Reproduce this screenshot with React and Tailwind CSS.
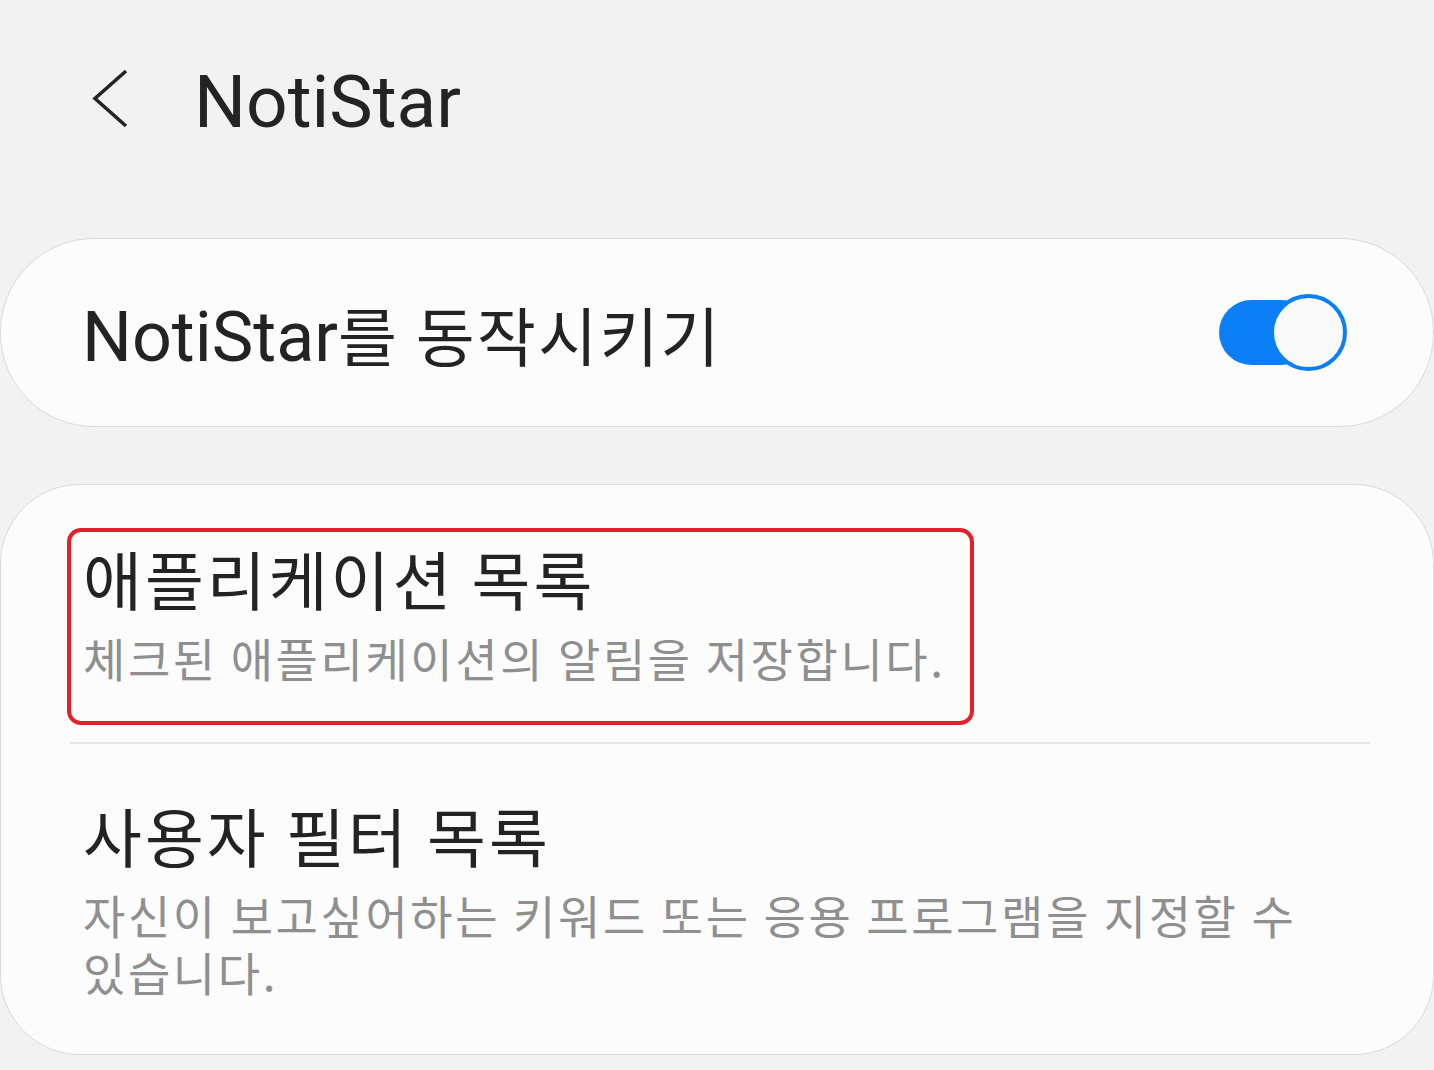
import React, { useState } from 'react';

const font = "font-['Roboto','Noto_Sans_CJK_KR',sans-serif]";
const kr = "font-['Noto_Sans_CJK_KR','Roboto',sans-serif]";

function Toggle({ on, onChange }) {
    return (
        <button
            onClick={() => onChange(!on)}
            className="relative w-[128px] h-[77px] shrink-0 cursor-pointer"
        >
            <span className={"absolute left-0 top-[6px] w-[95px] h-[65px] rounded-full " + (on ? "bg-[#0a7ff6]" : "bg-[#c8c8c8]")} />
            <span className={"absolute top-0 w-[77px] h-[77px] rounded-full bg-[#f9f9f9] border-[4px] " + (on ? "right-0 border-[#0a7ff6]" : "left-0 border-[#c8c8c8]")} />
        </button>
    );
}

export default function App() {
    const [enabled, setEnabled] = useState(true);

    return (
        <div className={"min-h-[1070px] w-[1434px] bg-[#f2f2f2] text-[#232323] " + font}>
            {/* header */}
            <div className="flex items-start pt-[60px] pl-[90px]">
                <svg width="40" height="60" viewBox="0 0 40 60" className="mt-[9px] shrink-0">
                    <polyline points="36,2 5,29.5 36,57" fill="none" stroke="#252525" strokeWidth="3.6" />
                </svg>
                <h1 className="ml-[64px] text-[73px] leading-[84px] font-normal">NotiStar</h1>
            </div>

            {/* main switch */}
            <div className="mt-[94px] h-[189px] bg-[#fcfcfc] border border-[#dadada] rounded-[94px] flex items-center justify-between pl-[81px] pr-[86px]">
                <div className="text-[70px] leading-[80px] pt-[4px] whitespace-nowrap">
                    NotiStar<span className={"text-[64px] tracking-[2.3px] " + kr}>를 동작시키기</span>
                </div>
                <Toggle on={enabled} onChange={setEnabled} />
            </div>

            {/* list */}
            <div className={"mt-[57px] bg-[#fcfcfc] border border-[#dadada] rounded-[80px] pt-[43px] pb-[54px] pl-[66px] pr-[63px] " + kr}>
                <div className="w-[907px] border-[4px] border-[#e4202a] rounded-[14px] pt-[9px] pb-[35px] px-[12px]">
                    <div className="text-[64px] leading-[72px] tracking-[3px]">애플리케이션 목록</div>
                    <div className="mt-4 text-[46px] leading-[57px] tracking-[2.6px] text-[#8f8f8f] whitespace-nowrap">체크된 애플리케이션의 알림을 저장합니다.</div>
                </div>
                <div className="mt-[17px] ml-[3px] h-[2px] bg-[#e6e6e6]" />
                <div className="pt-[54px] pl-[16px]">
                    <div className="text-[64px] leading-[72px] tracking-[3px]">사용자 필터 목록</div>
                    <div className="mt-4 text-[46px] leading-[57px] tracking-[2.6px] text-[#8f8f8f]">
                        자신이 보고싶어하는 키워드 또는 응용 프로그램을 지정할 수<br />있습니다.
                    </div>
                </div>
            </div>
        </div>
    );
}
